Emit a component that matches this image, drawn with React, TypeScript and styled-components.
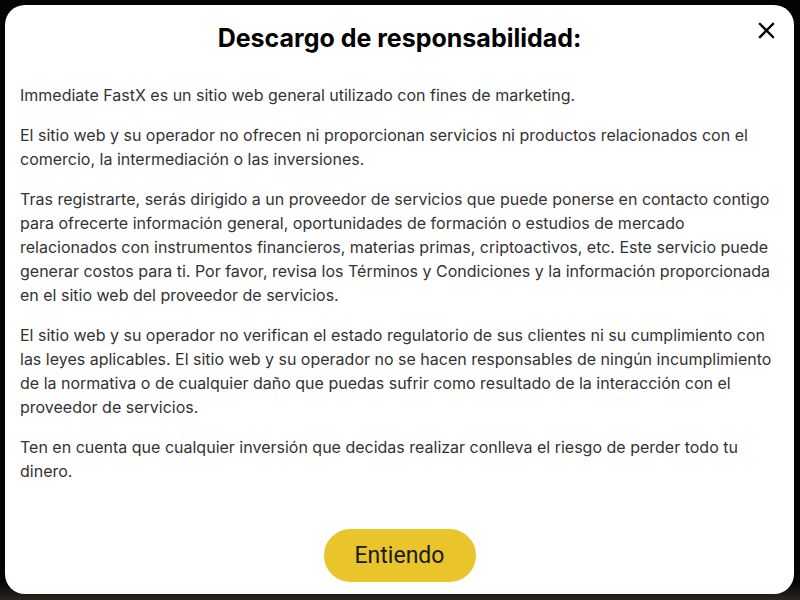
import { FC } from "react";
import styled, { createGlobalStyle } from "styled-components";

const GlobalStyle = createGlobalStyle`
    html, body {
        margin: 0;
        padding: 0;
        background: #0a0806;
    }
    * {
        box-sizing: border-box;
    }
`;

const Backdrop = styled.div`
    width: 800px;
    height: 600px;
    padding: 5px 6px 6px 5px;
    background: linear-gradient(to bottom, #050403 0%, #050403 97%, #2a2620 100%);
`;

const Modal = styled.div`
    position: relative;
    width: 789px;
    height: 589px;
    background: #fff;
    border-radius: 20px;
    padding: 18px 15px 12px;
    display: flex;
    flex-direction: column;
`;

const Title = styled.h2`
    margin: 0 0 30px;
    font-family: Inter, "Liberation Sans", sans-serif;
    font-size: 25px;
    line-height: 30px;
    font-weight: 700;
    color: #000;
    text-align: center;
`;

const CloseButton = styled.button`
    position: absolute;
    top: 11px;
    right: 14px;
    width: 28px;
    height: 28px;
    padding: 0;
    border: none;
    background: none;
    cursor: pointer;
    display: flex;
    align-items: center;
    justify-content: center;
`;

const Paragraph = styled.p`
    margin: 0 0 16px;
    font-family: Inter, "Liberation Sans", sans-serif;
    font-size: 16px;
    line-height: 24px;
    color: #333;
`;

const Footer = styled.div`
    margin-top: auto;
    display: flex;
    justify-content: center;
`;

const AcceptButton = styled.button`
    width: 152px;
    height: 53px;
    border: none;
    border-radius: 27px;
    background: #e9c42a;
    color: #1a1a1a;
    font-family: Roboto, "Liberation Sans", sans-serif;
    font-size: 23px;
    font-weight: 400;
    cursor: pointer;
`;

const CloseIcon: FC = () => (
    <svg width="17" height="17" viewBox="0 0 17 17">
        <path d="M2 2 L15 15 M15 2 L2 15" stroke="#000" strokeWidth="2.3" strokeLinecap="square" />
    </svg>
);

const App: FC = () => {
    return <>
        <GlobalStyle />
        <Backdrop>
            <Modal>
                <CloseButton aria-label="Cerrar"><CloseIcon /></CloseButton>
                <Title>Descargo de responsabilidad:</Title>
                <Paragraph>Immediate FastX es un sitio web general utilizado con fines de marketing.</Paragraph>
                <Paragraph>El sitio web y su operador no ofrecen ni proporcionan servicios ni productos relacionados con el comercio, la intermediación o las inversiones.</Paragraph>
                <Paragraph>Tras registrarte, serás dirigido a un proveedor de servicios que puede ponerse en contacto contigo para ofrecerte información general, oportunidades de formación o estudios de mercado relacionados con instrumentos financieros, materias primas, criptoactivos, etc. Este servicio puede generar costos para ti. Por favor, revisa los Términos y Condiciones y la información proporcionada en el sitio web del proveedor de servicios.</Paragraph>
                <Paragraph>El sitio web y su operador no verifican el estado regulatorio de sus clientes ni su cumplimiento con las leyes aplicables. El sitio web y su operador no se hacen responsables de ningún incumplimiento de la normativa o de cualquier daño que puedas sufrir como resultado de la interacción con el proveedor de servicios.</Paragraph>
                <Paragraph>Ten en cuenta que cualquier inversión que decidas realizar conlleva el riesgo de perder todo tu dinero.</Paragraph>
                <Footer>
                    <AcceptButton>Entiendo</AcceptButton>
                </Footer>
            </Modal>
        </Backdrop>
    </>;
};

export default App;
